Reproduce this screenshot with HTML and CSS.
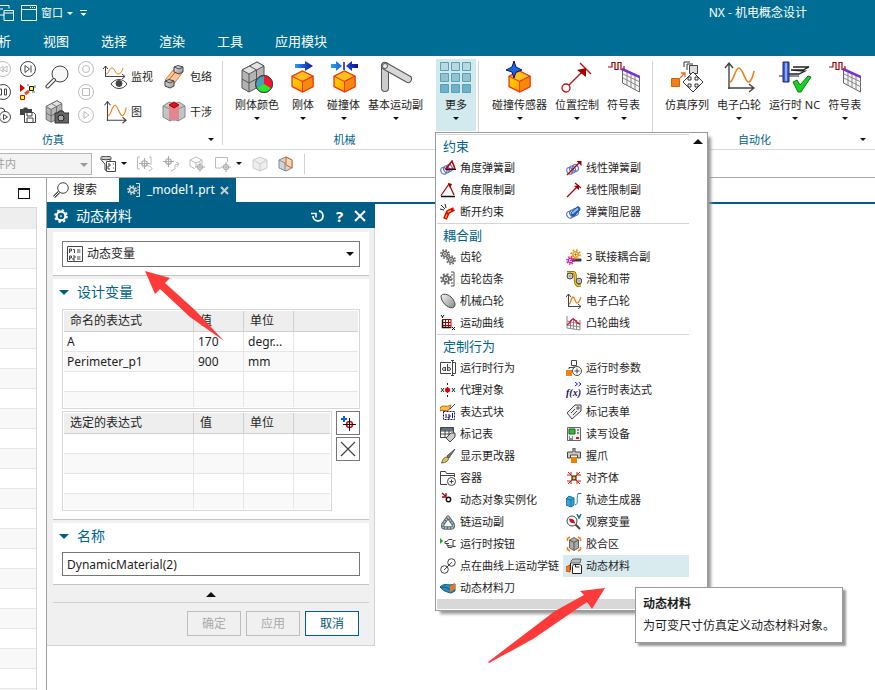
FILE: index.html
```html
<!DOCTYPE html>
<html lang="zh-CN">
<head>
<meta charset="utf-8">
<title>NX - 机电概念设计</title>
<link rel="stylesheet" href="styles.css">
</head>
<body>
<svg class="defs" aria-hidden="true">
  <defs>
    <linearGradient id="gOrange" x1="0" y1="0" x2="1" y2="1"><stop offset="0" stop-color="#ffe600"/><stop offset="1" stop-color="#ff8a00"/></linearGradient>
    <linearGradient id="gGrey" x1="0" y1="0" x2="1" y2="1"><stop offset="0" stop-color="#f4f4f4"/><stop offset="1" stop-color="#8a8a8a"/></linearGradient>
    <linearGradient id="gBlue" x1="0" y1="0" x2="1" y2="0"><stop offset="0" stop-color="#2a9df0"/><stop offset="1" stop-color="#1010a8"/></linearGradient>
    <symbol id="orangeCube" viewBox="0 0 22 22">
      <path d="M1 6 11 1l10 5v10l-10 5-10-5z" fill="url(#gOrange)" stroke="#f03a10" stroke-width="1.3" stroke-linejoin="round"/>
      <path d="M1 6l10 5 10-5-10-5z" fill="#ffc21a" stroke="#f03a10" stroke-linejoin="round"/>
      <path d="M11 11l10-5v10l-10 5z" fill="#f58a0a" stroke="#f03a10" stroke-linejoin="round"/>
    </symbol>
    <symbol id="greyStack" viewBox="0 0 24 32">
      <path d="M1 9 16 1l7 4v18L8 31l-7-4z" fill="#b4b4b4" stroke="#555"/>
      <path d="M1 9 16 1l7 4L8 13z" fill="#e2e2e2" stroke="#555"/>
      <path d="M8 13v18M1 18l7 4 15-8M15.500 9v18M8.500 5l7 4" fill="none" stroke="#555"/>
    </symbol>
    <symbol id="symTable" viewBox="0 0 32 32">
      <path d="M0 6h4V1.500h3v7h3v-7h3v7h3V5" fill="none" stroke="#a80000" stroke-width="1.200"/>
      <path d="M14.500 8l17 8v15l-17-9z" fill="#f6f6f6" stroke="#666"/>
      <path d="M19 10v14M23 12v15M27 14v15M15 13l17 8M15 17l17 9" fill="none" stroke="#888"/>
      <path d="M14 8 32 16" stroke="#7a30d8" stroke-width="2.500"/>
    </symbol>
    <symbol id="wave" viewBox="0 0 32 32">
      <path d="M6 28V3M2 7l4-5 4 5M5 27h25M26 23l5 4-5 4" fill="none" stroke="#444" stroke-width="1.400"/>
      <path d="M7 21c4-1 5-14 9-14s6 15 10 14c3-1 4-6 5-11" fill="none" stroke="#f08018" stroke-width="1.600"/>
    </symbol>
    <symbol id="gear" viewBox="0 0 16 16">
      <circle cx="8" cy="8" r="6.500" fill="none" stroke="currentColor" stroke-width="2.600" stroke-dasharray="2.600 2.500"/>
      <circle cx="8" cy="8" r="4" fill="none" stroke="currentColor" stroke-width="2.400"/>
      <circle cx="8" cy="8" r="1" fill="currentColor"/>
    </symbol>
    <symbol id="spring" viewBox="0 0 16 16">
      <g fill="none" stroke="#5f78c8" stroke-width="1.300"><ellipse cx="4" cy="11" rx="3" ry="3.800" transform="rotate(-30 4 11)"/><ellipse cx="7" cy="9.500" rx="3" ry="3.800" transform="rotate(-30 7 9.500)"/><ellipse cx="10" cy="8" rx="3" ry="3.800" transform="rotate(-30 10 8)"/></g>
    </symbol>
    <symbol id="target" viewBox="0 0 16 16"><circle cx="8" cy="8" r="4" fill="none" stroke="currentColor" stroke-width="1.800"/><path d="M8 0v16M0 8h16" stroke="currentColor" stroke-width="1.600"/></symbol>
  </defs>
</svg>

<header class="top">
  <div class="titlebar">
    <div class="quick">
      <button class="q" aria-label="切换窗口"><svg width="14" height="16" viewBox="0 0 14 16"><path d="M-4 .5H9v3M-4 4h7M4 5.500h9.500v10H4zM4 8h9.500M4.500 10H0" fill="none" stroke="#fff"/></svg></button>
      <button class="q win"><svg width="16" height="16" viewBox="0 0 16 16"><path d="M.5.5h15v15H.5zM.5 4.500h15" fill="none" stroke="#fff"/><path d="M9 2.500h5" stroke="#fff" stroke-dasharray="1 1"/></svg><span>窗口</span><i class="caret"></i></button>
      <button class="q" aria-label="自定义"><svg width="7" height="7" viewBox="0 0 7 7"><path d="M0 .5h7" stroke="#fff"/><path d="M.5 3h6l-3 3z" fill="#fff"/></svg></button>
    </div>
    <div class="apptitle">NX - 机电概念设计</div>
  </div>
  <nav class="tabs">
    <a href="#">分析</a><a href="#">视图</a><a href="#">选择</a><a href="#">渲染</a><a href="#">工具</a><a href="#">应用模块</a>
  </nav>
</header>

<section class="ribbon">
  <div class="group sim">
    <div class="tools">
      <div class="col small">
        <button aria-label="后退"><svg class="dim" viewBox="0 0 16 16"><circle cx="8" cy="8" r="7.500"/><path d="M8 5v6L4 8zM12 5v6L8 8z"/></svg></button>
        <button aria-label="暂停"><svg viewBox="0 0 16 16"><circle cx="8" cy="8" r="7.500"/><path d="M4.500 5h2v6h-2zM9.500 5h2v6h-2z"/></svg></button>
        <button aria-label="循环播放"><svg viewBox="0 0 16 16"><circle cx="6" cy="5" r="4"/><circle cx="10" cy="10" r="5.500" fill="#fff"/><path d="M8.500 7.500v5l4-2.500z"/></svg></button>
      </div>
      <div class="col small">
        <button aria-label="前进"><svg viewBox="0 0 16 16"><circle cx="8" cy="8" r="7.500"/><path d="M5 4.500v7L9.500 8zM11 4.500v7"/></svg></button>
        <button aria-label="捕捉排列"><svg viewBox="0 0 16 16"><path d="M0 0v8l5-4z" fill="#d80000" stroke="none"/><path d="M.5 11.500h4v4h-4z" fill="#ff0" stroke="#e00000"/><path d="M9.500 2.500h4v4h-4z" fill="#ff0" stroke="#111"/><path d="M5 10l4-3" stroke="#e05020" stroke-width="3"/><path d="M7 1h2M15 1v3M15 8h-3" stroke="#3868d0"/></svg></button>
        <button aria-label="保存快照"><svg viewBox="0 0 16 16"><path d="M0 2h3l1-1.500h3L8 2h4v6H0z" fill="#444" stroke="none"/><path d="M4.500 5.500h9l2 2v8h-11z" fill="#fff"/><path d="M7 6v3h5V6M7 15v-4h6v4"/></svg></button>
      </div>
      <div class="col mid">
        <button aria-label="检查"><svg viewBox="0 0 24 24"><circle cx="15" cy="9" r="8" fill="#f8f8f8"/><path d="M9 15l-6.500 6.500" stroke="#444" stroke-width="4" stroke-linecap="round"/><path d="M9 15l-6.500 6.500" stroke="#fff" stroke-width="2" stroke-linecap="round"/></svg></button>
        <button aria-label="快照"><svg viewBox="0 0 24 24"><use href="#greyStack" x="0" y="0" width="18" height="23"/><path d="M10 13h3l1-2h4l1 2h5v10H10z" fill="#666" stroke="#333"/><circle cx="16" cy="18" r="3" fill="#aaa" stroke="#222"/></svg></button>
      </div>
      <div class="col small">
        <button aria-label="录制"><svg class="dim" viewBox="0 0 16 16"><circle cx="8" cy="8" r="7.500"/><circle cx="8" cy="8" r="3.500"/></svg></button>
        <button aria-label="停止"><svg class="dim" viewBox="0 0 16 16"><circle cx="8" cy="8" r="7.500"/><path d="M4.500 4.500h7v7h-7z"/></svg></button>
        <button aria-label="播放"><svg class="dim" viewBox="0 0 16 16"><circle cx="8" cy="8" r="7.500"/><path d="M6 4.500v7L11 8z"/></svg></button>
      </div>
      <div class="col mid">
        <button><svg viewBox="0 0 24 24"><path d="M2.500 12V1M0 4l2.500-3L5 4M2 11.500h20M19 9l3 2.500-3 2.500"/><path d="M3 9c3 0 3-6 6-6s3 6 6 6 4-3 5-6" stroke="#f08018"/><path d="M8 19c4-6 12-6 16 0-4 6-12 6-16 0z" fill="#fff"/><circle cx="16" cy="18.500" r="3" fill="#444"/></svg><span>监视</span></button>
        <button><svg viewBox="0 0 24 24"><use href="#wave" x="0" y="0" width="24" height="24"/></svg><span>图</span></button>
      </div>
      <div class="col mid">
        <button><svg viewBox="0 0 24 24"><path d="M3 15 12 4l8 4-9 12z" fill="#f8c49a" stroke="#e08030"/><path d="M6 16 15 5" stroke="#d86010"/><path d="M12 2l4-1.500L21 2v5l-4 2-5-2z" fill="url(#gGrey)"/><path d="M12 2l5 2 4-2M3 16l4-1.500L12 16v5l-4 2-5-2z" fill="url(#gGrey)"/><path d="M3 16l5 2 4-2"/></svg><span>包络</span></button>
        <button><svg viewBox="0 0 24 24"><path d="M1 6l6-4 5 2 5-2 6 4v11l-7 4-4-2-4 2-7-4z" fill="#c4c4c4" stroke="#888"/><path d="M1 6l7 3v12M23 6l-7 3v12" stroke="#888"/><path d="M7 6v13l5 2 5-2V6z" fill="#e08890" stroke="none"/><path d="M7 5l5-3 5 3-5 3z" fill="#e01020" stroke="#a00"/></svg><span>干涉</span></button>
      </div>
    </div>
    <div class="caption"><span>仿真</span><i class="caret"></i></div>
  </div>

  <div class="group mech">
    <div class="tools">
      <button class="big"><svg viewBox="0 0 32 32"><use href="#greyStack" x="0" y="0" width="24" height="32"/><circle cx="23" cy="23" r="8.500" fill="#4aa0b8" stroke="#333"/><path d="M23 23v-8.500a8.500 8.500 0 0 1 7 13z" fill="#ff1030"/><path d="M23 23l7 4.500a8.500 8.500 0 0 1-14 0z" fill="#28e828"/><circle cx="23" cy="23" r="8.500" fill="none" stroke="#444"/></svg><span>刚体颜色</span><i class="caret"></i></button>
      <button class="big"><svg viewBox="0 0 32 32"><path d="M8 3h10V0l8 5-8 5V7H8z" fill="url(#gBlue)"/><use href="#orangeCube" x="4" y="9" width="23" height="23"/></svg><span>刚体</span><i class="caret"></i></button>
      <button class="big"><svg viewBox="0 0 32 32"><path d="M3 3h5V0l6 5-6 5V7H3zM30 3h-6V0l-6 5 6 5V7h6z" fill="url(#gBlue)"/><path d="M16 1v8" stroke="#1010a8" stroke-width="1.500"/><use href="#orangeCube" x="5" y="9" width="23" height="23"/></svg><span>碰撞体</span><i class="caret"></i></button>
      <button class="big"><svg viewBox="0 0 32 32"><path d="M5 5v22" stroke="#555" stroke-width="8" stroke-linecap="round"/><path d="M5 5v22" stroke="#ccc" stroke-width="6" stroke-linecap="round"/><path d="M5 5l23 13" stroke="#555" stroke-width="8" stroke-linecap="round"/><path d="M5 5l23 13" stroke="#d8d8d8" stroke-width="6" stroke-linecap="round"/><circle cx="5" cy="5" r="2.500" fill="#eee" stroke="#555"/></svg><span>基本运动副</span><i class="caret"></i></button>
      <div class="morewrap">
        <button class="big more" aria-expanded="true"><svg viewBox="0 0 32 32"><g stroke="#58a0b4" fill="#b8d8e2"><path d="M.5 1.500h8v8h-8zM11.500 1.500h8v8h-8zM22.500 1.500h8v8h-8z"/><path fill="#94c2d2" d="M.5 12.500h8v8h-8zM11.500 12.500h8v8h-8zM22.500 12.500h8v8h-8z"/><path fill="#70b0c8" d="M.5 23.500h8v8h-8zM11.500 23.500h8v8h-8zM22.500 23.500h8v8h-8z"/></g></svg><span>更多</span><i class="caret"></i></button>

        <div class="menu">
          <div class="menu-body">
            <div class="sections">
              <section>
                <h2>约束</h2>
                <div class="items">
                  <button><svg viewBox="0 0 16 16"><use href="#spring" width="15" height="16"/><path d="M6 9l6-8 3 8z" stroke="#b80000" stroke-width="1.500"/><path d="M6 9.500h10" stroke="#111"/></svg>角度弹簧副</button>
                  <button><svg viewBox="0 0 16 16"><use href="#spring" width="15" height="16"/><path d="M1 15 13 3" stroke="#b80000" stroke-width="1.300"/><path d="M15.500 1v5l-5-5z" fill="#900" stroke="none"/></svg>线性弹簧副</button>
                  <button><svg viewBox="0 0 16 16"><path d="M1 13.500 9 2l5 11" stroke="#b80000" stroke-width="1.300"/><path d="M8 1l4 1-2 4z" fill="#900" stroke="none"/><path d="M1 14.500h14" stroke="#111" stroke-width="1.500"/></svg>角度限制副</button>
                  <button><svg viewBox="0 0 16 16"><path d="M1 15 11 5M9 1l6 5" stroke="#b80000" stroke-width="1.300"/><path d="M13 3v5L8 4z" fill="#900" stroke="none"/></svg>线性限制副</button>
                  <button><svg viewBox="0 0 16 16"><path d="M5 15l3-7 6-3" stroke="#d80000" stroke-width="4"/><path d="M5.500 14 8 8l5.500-3" stroke="#ffa010" stroke-width="1.500" stroke-dasharray="4 2"/><path d="M1 1l4 4M5 0l1 4M0 5l4 1" stroke="#222"/></svg>断开约束</button>
                  <button><svg viewBox="0 0 16 16"><use href="#spring" width="15" height="16"/><path d="M7 10l5-5" stroke="#2058b0" stroke-width="5" stroke-linecap="round"/><path d="M6 9.500l6-5" stroke="#88c8f0" stroke-width="2"/></svg>弹簧阻尼器</button>
                </div>
              </section>
              <section>
                <h2>耦合副</h2>
                <div class="items">
                  <button><svg viewBox="0 0 16 16" color="#666"><use href="#gear" x="0" y="0" width="10" height="10"/><use href="#gear" x="6" y="6" width="10" height="10"/></svg>齿轮</button>
                  <button><svg viewBox="0 0 16 16"><path d="M6 10h9v2H6z" fill="#1028a0"/><g color="#f09810"><use href="#gear" x="4" y="0" width="11" height="11"/></g><g color="#d020a0"><use href="#gear" x="0" y="7" width="9" height="9"/></g></svg>3 联接耦合副</button>
                  <button><svg viewBox="0 0 16 16" color="#666"><use href="#gear" x="0" y="2" width="12" height="12"/><path d="M11 1h3v14h-3M11 4h2M11 8h2M11 12h2" stroke="#555"/></svg>齿轮齿条</button>
                  <button><svg viewBox="0 0 16 16"><path d="M1 1.500h6c4 0 1 8 3 11 1 2 3 2.500 5 2.500" stroke="#806000" stroke-width="3"/><path d="M1 1.500h6c4 0 1 8 3 11 1 2 3 2.500 5 2.500" stroke="#f0c830" stroke-width="1.500"/><circle cx="4" cy="5" r="3" fill="#ccc"/><circle cx="13" cy="10" r="2.800" fill="#ccc"/><path d="M3.500 5h1M12.500 10h1"/></svg>滑轮和带</button>
                  <button><svg viewBox="0 0 16 16"><path d="M1 3c1-3 7-2 10 1 4 4 5 8 3 10-3 3-13-3-13-11z" fill="url(#gGrey)"/></svg>机械凸轮</button>
                  <button><svg viewBox="0 0 16 16"><path d="M2.500 14V1M0 4l2.500-3L5 4M2 13.500h13M12 11l3 2.500-3 2.500"/><path d="M3 11c2 0 2-7 4-7s2 6 4 6 3-3 4-6" stroke="#f08018" stroke-width="1.300"/></svg>电子凸轮</button>
                  <button><svg viewBox="0 0 16 16"><path d="M2.500 4v9M5.500 4v9M8.500 4v9M11 4v9M2 4.500h9M2 7.500h9M2 10.500h9" stroke="#b80000"/><path d="M2 12.500h9M2.500 5v8" stroke="#111" stroke-width="1.500"/><path d="M1 0l1.500 2L4 0M2.500 2v1M12 12l3 3M15 12l-3 3" stroke="#111"/></svg>运动曲线</button>
                  <button><svg viewBox="0 0 16 16"><path d="M1 1v12l13 2V5M4.500 5v8M7.500 3v11M10.500 5v9M1 6l13 3M1 10l13 2" stroke="#888"/><path d="M1 10c3-1 4-6 6-6s3 4 7 5" stroke="#e01040" stroke-width="1.500"/></svg>凸轮曲线</button>
                </div>
              </section>
              <section>
                <h2>定制行为</h2>
                <div class="items">
                  <button><svg viewBox="0 0 16 16"><path d="M11 2.500H.5v11H11M13 2.500h2.500v11H13M11 .5h3M11 15.500h3M12.500 1v14"/><circle cx="4" cy="9" r="1.500"/><path d="M5.500 7v4M7.500 4v7"/><circle cx="9" cy="9" r="1.500"/></svg>运行时行为</button>
                  <button><svg viewBox="0 0 16 16"><path d="M5.500.5h5v5h-5zM8 6v3M3 9V7.500h6"/><path d="M0 10h6v6H0z" fill="#f08018" stroke="none"/><circle cx="11" cy="11" r="4.500" fill="#fff"/><path d="M8.500 11h5M11 8.500v5"/></svg>运行时参数</button>
                  <button><svg viewBox="0 0 16 16"><path d="M1 6l3 4M4 6l-3 4M12 6l3 4M15 6l-3 4" stroke="#222"/><path d="M7.500 1v14" stroke="#1818a0" stroke-dasharray="2 2"/><circle cx="7.500" cy="8" r="2.500" fill="#e00000" stroke="none"/></svg>代理对象</button>
                  <button><svg viewBox="0 0 16 16"><path d="M9 0l2.500 2L9 4M12.500 0 15 2l-2.500 2" stroke="#1010ff"/><text class="fx" x="0" y="14">f(x)</text></svg>运行时表达式</button>
                  <button><svg viewBox="0 0 16 16"><path d="M3.500 7.500h11v8h-11z" fill="#fff" stroke="#101080" stroke-dasharray="2 1"/><path d="M6 14v-4M8 11h2v2H8v1h2M12.500 14V9" stroke="#101080"/><path d="M0 4c3-4 6 0 11-3l-2 5c-4 2-6-1-9 1z" fill="#ffc040" stroke="#c06000"/><path d="M15 0l-5 5" stroke="#444"/></svg>表达式块</button>
                  <button><svg viewBox="0 0 16 16"><path d="M1 9 9 1h6v6l-9 8z" fill="#eee"/><circle cx="12" cy="4" r="1.200"/><path d="M5 9l4-4M7 11l4-4"/></svg>标记表单</button>
                  <button><svg viewBox="0 0 16 16"><path d="M.5 1.500h13v10H.5zM5 2v9M9 2v9M1 5h13M1 8h13"/><path d="M1 2h12v2H1z" fill="#68a8c0"/><path d="M6 12l5-5h4v4l-5 5z" fill="#ccc"/></svg>标记表</button>
                  <button><svg viewBox="0 0 16 16"><path d="M1.500 1.500h13v13h-13z" fill="#eee" stroke="#666"/><path d="M3 3h6v5H3z" fill="#10d020"/><path d="M11 4h2M11 7h2M3 11h1M6 11h1M3 13h4" stroke="#222"/><path d="M10 11h3v2h-3z" fill="#c02020" stroke="none"/></svg>读写设备</button>
                  <button><svg viewBox="0 0 16 16"><path d="M15 1 7 8l2 2z" fill="#777" stroke="#555"/><path d="M7 9l1.500 1.500c0 2-2 4-7 4.500 1-2 1.500-6 5.500-6z" fill="#e0c060" stroke="#706020"/></svg>显示更改器</button>
                  <button><svg viewBox="0 0 16 16"><path d="M7 0h2v4h5.500v6h-3V7h-7v3h-3V4H7z" fill="#ccc"/><path d="M5 9h6v6H5z" fill="#f08000" stroke="none"/></svg>握爪</button>
                  <button><svg viewBox="0 0 16 16"><path d="M7 14.500H.5V1.500h5l1 2h8V7M1 5.500h14"/><circle cx="11.500" cy="11.500" r="4" fill="#fff"/><path d="M9.500 11.500h4M11.500 9.500v4"/></svg>容器</button>
                  <button><svg viewBox="0 0 16 16"><path d="M2 2l4 4M14 2l-4 4M2 14l4-4M14 14l-4-4M5 2v3H1M11 2v3h4M5 14v-3H1M11 14v-3h4" stroke="#c02010"/><path d="M6 6h4v4H6z" fill="#ffb020" stroke="#111"/></svg>对齐体</button>
                  <button><svg viewBox="0 0 16 16"><path d="M2 1l4 3.500M6 1v4H2" stroke="#b80000" stroke-width="1.300"/><circle cx="8.500" cy="7.500" r="2.200" stroke="#111" stroke-width="1.400"/></svg>动态对象实例化</button>
                  <button><svg viewBox="0 0 16 16"><path d="M0 7l3-3 5 2v7l-3 2-5-2z" fill="#38a8d0" stroke="#1870a0"/><path d="M5 8v7M0 7l5 1 3-2" stroke="#1870a0"/><path d="M9 13c4-1 1-6 3-11.500h3.500" stroke="#208098"/></svg>轨迹生成器</button>
                  <button><svg viewBox="0 0 16 16"><path d="M8 3 13 10c1 3 0 4-2 4H5c-2 0-3-1-2-4z" stroke="#5a6870" stroke-width="3.500" stroke-linejoin="round"/><path d="M8 3 13 10c1 3 0 4-2 4H5c-2 0-3-1-2-4z" stroke="#b4c0c6" stroke-width="1.500" stroke-dasharray="2 1"/></svg>链运动副</button>
                  <button><svg viewBox="0 0 16 16"><circle cx="6" cy="7" r="5"/><path d="M9.500 10.500l4.500 4.500" stroke-width="2"/><path d="M3.500 5l4 1 1 3-4-1z" fill="#d01020" stroke="#d01020"/><path d="M11 0l2 4 2-4" stroke="#107088" stroke-width="1.500"/></svg>观察变量</button>
                  <button><svg viewBox="0 0 16 16"><path d="M0 2l3 3-3 3z" fill="#10b010" stroke="none"/><path d="M15.500 4.500H13l-1-1H8.500L7 5.500H5v2h4M7 7.500v2h2M8 9.500v2h4l1-1h2.500zM13 5v5.500"/></svg>运行时按钮</button>
                  <button><svg viewBox="0 0 16 16"><path d="M3.500 4 8 1.500 12.500 4v8L8 14.500 3.500 12z" fill="#aaa" stroke="#666"/><path d="M3.500 4 8 6.500 12.500 4M8 7v7" stroke="#555"/><path d="M1.500 5V2.500L4 1M12 1l2.500 1.500V5M1.500 11v2.500L4 15M12 15l2.500-1.500V11" stroke="#f08018" stroke-width="1.500"/></svg>胶合区</button>
                  <button><svg viewBox="0 0 16 16"><circle cx="4.500" cy="11.500" r="3.800"/><circle cx="11.500" cy="4.500" r="3.800"/><path d="M4 12l8-8"/></svg>点在曲线上运动学链</button>
                  <button class="on"><svg viewBox="0 0 16 16"><path d="M0 9l4-2v7l-4-1z" fill="#f08018" stroke="#c05000"/><path d="M5 3l2-2h8l-1 4H5z" fill="#bbb" stroke="#666"/><path d="M7.500 6.500h6l2 1v8h-9v-7z" fill="#fff" stroke="#222"/><path d="M4.500 5v7M9.500 7v2h4" stroke="#222"/></svg>动态材料</button>
                  <button><svg viewBox="0 0 16 16"><path d="M0 7c3-3 7-3 10-2l5-1v7l-4 2C7 12 3 11 0 7z" fill="#2890b8" stroke="#105878"/><path d="M10 6l5-3v6l-5 3z" fill="#e87820" stroke="none"/><path d="M1 7.500c3-1 6 0 9 2" stroke="#105878"/></svg>动态材料刀</button>
                </div>
              </section>
            </div>
            <div class="scroll"><i class="caret up"></i></div>
          </div>
          <div class="menu-foot"></div>
          <div class="tip" role="tooltip"><strong>动态材料</strong><span>为可变尺寸仿真定义动态材料对象。</span></div>
        </div>
      </div>
    </div>
    <div class="caption"><span>机械</span></div>
  </div>

  <div class="group">
    <div class="tools">
      <button class="big"><svg viewBox="0 0 32 32"><use href="#orangeCube" x="4" y="9" width="23" height="23"/><path d="M10 0l2 6 6 3-6 2-2 6-2-6-6-2 6-3z" fill="#1868e8" stroke="#101070"/></svg><span>碰撞传感器</span><i class="caret"></i></button>
      <button class="big"><svg viewBox="0 0 32 32"><circle cx="5" cy="27" r="4" fill="#fff" stroke="#c01010" stroke-width="1.300"/><path d="M8 24 23 9M19 2l11 11" stroke="#c01010" stroke-width="1.400"/><path d="M25 7v9l-9-7z" fill="#a00000"/></svg><span>位置控制</span><i class="caret"></i></button>
      <button class="big"><svg viewBox="0 0 32 32"><use href="#symTable" width="32" height="32"/></svg><span>符号表</span><i class="caret"></i></button>
    </div>
  </div>

  <div class="group auto">
    <div class="tools">
      <button class="big"><svg viewBox="0 0 32 32"><path d="M13 6V1h6M16 9V3h6" fill="none" stroke="#333"/><path d="M18.500 4.500h8v8h-8z" fill="#ddd" stroke="#444"/><path d="M.5 17.500h8v8h-8z" fill="#f08018" stroke="#d86000"/><path d="M9 17l5-5M10 12h4v4" fill="none" stroke="#e07020" stroke-width="1.300"/><path d="M22 11l5 5h-3v3h3v-3l5 5-5 5v-3h-3v3h3l-5 5-5-5h3v-3h-3v3l-5-5 5-5v3h3v-3h-3z" fill="#fff" stroke="#333"/></svg><span>仿真序列</span></button>
      <button class="big"><svg viewBox="0 0 32 32"><use href="#wave" width="32" height="32"/></svg><span>电子凸轮</span><i class="caret"></i></button>
      <button class="big"><svg viewBox="0 0 32 32"><path d="M14 6h16l-6 3H12l14 1-6 3H10" fill="none" stroke="#222" stroke-width="1.300"/><path d="M0 15h9M10 15h10" stroke="#222"/><path d="M4 1h6v20H4z" fill="#4060d0" stroke="#182878"/><path d="M7 2v18" stroke="#a8c0ff" stroke-width="1.500"/><path d="M14 21l4-2 3 5 8-9 3 1-10 15h-3z" fill="#18d028" stroke="#088010"/></svg><span>运行时 NC</span><i class="caret"></i></button>
      <button class="big"><svg viewBox="0 0 32 32"><use href="#symTable" width="32" height="32"/></svg><span>符号表</span><i class="caret"></i></button>
    </div>
    <div class="caption"><span>自动化</span><i class="caret"></i></div>
  </div>
</section>

<div class="selbar">
  <div class="scope"><select aria-label="选择范围" disabled><option>部件内</option></select><i class="caret"></i></div>
  <button aria-label="过滤器"><svg viewBox="0 0 16 16"><ellipse cx="6" cy="2" rx="5.500" ry="1.800" fill="#ccc"/><path d="M.5 3 5 8v6l3 1V8l3-5"/><path d="M6.500 5.500h9v10h-9z" fill="#fff"/><path d="M8 8h2v2H8v3h2M13 8h1M13 12h1" /></svg><i class="caret"></i></button>
  <button aria-label="选择组件" disabled><svg viewBox="0 0 16 16" color="#aaa"><path d="M3 1H.5v12H3M12 1h2v8" stroke="#bbb"/><use href="#target" x="2" y="2" width="11" height="11"/><path d="M10 10c4 0 5 1 5 3l-3 2" stroke="#bbb"/></svg></button>
  <button aria-label="选择路径" disabled><svg viewBox="0 0 16 16" color="#aaa"><use href="#target" x="0" y="0" width="11" height="11"/><path d="M8 15l4-2V9l3-1M13 6l3 2-2 3" stroke="#bbb"/></svg></button>
  <button aria-label="选择实体" disabled><svg viewBox="0 0 16 16" color="#aaa"><path d="M1 4l6-3 6 3v4M1 4v6l5 3M1 4l6 3 6-3M7 7v4" stroke="#bbb"/><use href="#target" x="6" y="6" width="10" height="10"/></svg></button>
  <button aria-label="框选" disabled><svg viewBox="0 0 16 16" color="#aaa"><path d="M6 12H.5V1.500h12V6" stroke="#bbb"/><use href="#target" x="6" y="6" width="10" height="10"/></svg><i class="caret"></i></button>
  <button aria-label="着色" disabled><svg viewBox="0 0 16 16"><path d="M1 4l7-3 7 3v8l-7 3-7-3z" fill="#eee" stroke="#ccc"/><path d="M1 4l7 4 7-4M8 8v7" stroke="#ccc"/></svg></button>
  <button aria-label="剖切"><svg viewBox="0 0 16 16"><path d="M1 4l7-3 6 3v8l-6 3-7-3z" fill="#d4d4d4" stroke="#888"/><path d="M1 4l6 3v8" stroke="#888"/><path d="M8 1l6 3v8l-6-3z" fill="#f4d8c4" stroke="#d86010"/></svg></button>
  <span class="sep"></span>
</div>

<main class="work">
  <aside class="nav">
    <button class="max" aria-label="最大化"></button>
    <div class="grid"></div>
  </aside>
  <div class="doc">
    <div class="doctabs">
      <a class="tab" href="#"><svg viewBox="0 0 16 16"><circle cx="10" cy="6" r="5.300"/><path d="M6 10l-5 5" stroke-width="3"/><path d="M6 10l-5 5" stroke="#fff"/></svg>搜索</a>
      <a class="tab on" href="#"><svg viewBox="0 0 14 16" color="#ddd"><use href="#gear" x="0" y="3" width="10" height="10"/><path d="M9 1.500h3.500v13H9M10 5h2M10 8h2M10 11h2" stroke="#ddd"/></svg>_model1.prt<svg class="x" viewBox="0 0 9 9"><path d="M1 1l7 7M8 1 1 8" stroke="#ccc" stroke-width="2"/></svg></a>
    </div>
    <div class="canvas">
      <form class="dialog">
        <div class="dtitle">
          <svg viewBox="0 0 16 16" width="14" height="14"><circle cx="8" cy="8" r="5" fill="none" stroke="#fff" stroke-width="2.500"/><circle cx="8" cy="8" r="6.800" fill="none" stroke="#fff" stroke-width="2" stroke-dasharray="2.700 2.640"/><circle cx="8" cy="8" r="1" fill="#fff"/></svg>
          <h1>动态材料</h1>
          <button type="button" aria-label="重置"><svg viewBox="0 0 14 14"><path d="M8 2a5 5 0 1 1-6 5" fill="none" stroke="#fff" stroke-width="1.800"/><path d="M0 4.500h5v4" fill="none" stroke="#fff" stroke-width="1.500"/></svg></button>
          <button type="button" class="help">?</button>
          <button type="button" aria-label="关闭"><svg viewBox="0 0 14 14"><path d="M2 2l10 10M12 2 2 12" stroke="#fff" stroke-width="2"/></svg></button>
        </div>
        <div class="card first">
          <div class="combo">
            <svg viewBox="0 0 16 16"><path d="M.5.5h15v15H.5z" fill="#fff" stroke="#444"/><path d="M2.500 7V3h2v2h-2M6 3.500h1.500V7M10 4h3.500M10 6h3.500M2.500 14v-4h2v2h-2M6 10h2v2H6v2h2M10 11h3.500M10 13h3.500" fill="none" stroke="#444"/></svg>
            <select aria-label="类型"><option>动态变量</option></select>
            <i class="caret"></i>
          </div>
        </div>
        <div class="card">
          <h3><i class="tri"></i>设计变量</h3>
          <table>
            <colgroup><col class="c1"><col class="c2"><col class="c2"><col></colgroup>
            <thead><tr><th>命名的表达式</th><th>值</th><th>单位</th><th></th></tr></thead>
            <tbody>
              <tr><td>A</td><td>170</td><td>degr...</td><td></td></tr>
              <tr><td>Perimeter_p1</td><td>900</td><td>mm</td><td></td></tr>
              <tr><td></td><td></td><td></td><td></td></tr>
              <tr class="last"><td></td><td></td><td></td><td></td></tr>
            </tbody>
          </table>
          <div class="pair">
            <table>
              <colgroup><col class="c1"><col class="c2"><col class="c2"><col></colgroup>
              <thead><tr><th>选定的表达式</th><th>值</th><th>单位</th><th></th></tr></thead>
              <tbody>
                <tr><td></td><td></td><td></td><td></td></tr>
                <tr><td></td><td></td><td></td><td></td></tr>
                <tr><td></td><td></td><td></td><td></td></tr>
                <tr class="last"><td></td><td></td><td></td><td></td></tr>
              </tbody>
            </table>
            <div class="side">
              <button type="button" aria-label="添加"><svg viewBox="0 0 16 16"><path d="M1 4h6M4 1v6" stroke="#0060ff" stroke-width="2"/><circle cx="9.500" cy="9.500" r="3" fill="none" stroke="#e00000" stroke-width="1.500"/><path d="M9.500 3v13M3 9.500h13" stroke="#111"/></svg></button>
              <button type="button" aria-label="移除"><svg viewBox="0 0 16 16"><path d="M1 1l14 14M15 1 1 15" stroke="#444" stroke-width="1.200"/></svg></button>
            </div>
          </div>
        </div>
        <div class="card name">
          <h3><i class="tri"></i><label for="nm">名称</label></h3>
          <input id="nm" type="text" value="DynamicMaterial(2)">
        </div>
        <div class="fold"><i class="caret up"></i></div>
        <div class="actions">
          <button type="button" disabled>确定</button>
          <button type="button" disabled>应用</button>
          <button type="button" class="go">取消</button>
        </div>
        <svg class="arrow a1" viewBox="0 0 80 72"><path d="M0 0l25 7-5 5 30 27 29 31L45 46 15 18l-5 5z" fill="#fd3a3a"/></svg>
      </form>
      <svg class="arrow a2" viewBox="0 0 118 78"><path d="M117 1 92 4l4 4-29 16L0 75l1 1 44-24 54-37 5 7z" fill="#fd3a3a"/></svg>
    </div>
  </div>
</main>
</body>
</html>
```

FILE: styles.css
```css
* { box-sizing: border-box; }
html, body { height: 100%; }
body {
  margin: 0;
  display: flex;
  flex-direction: column;
  overflow: hidden;
  background: #fff;
  color: #1e1e1e;
  font: 12px/16px "Noto Sans", "Noto Sans CJK SC", sans-serif;
}
button {
  margin: 0;
  padding: 0;
  border: 0;
  background: none;
  color: inherit;
  font: inherit;
}
a { color: inherit; text-decoration: none; }
h1, h2, h3 { margin: 0; font-weight: 400; }
svg { display: block; flex: none; }
.defs { position: absolute; width: 0; height: 0; }

.caret {
  display: block;
  flex: none;
  width: 0;
  height: 0;
  border: 3px solid transparent;
  border-top-color: #111;
  border-bottom-width: 0;
}
.caret.up {
  border: 5px solid transparent;
  border-bottom-color: #111;
  border-top-width: 0;
}

/* title and ribbon tabs */
.top {
  flex: none;
  height: 56px;
  overflow: hidden;
  background: #006e94;
  color: #fff;
}
.titlebar { display: flex; align-items: center; height: 26px; }
.quick { display: flex; align-items: center; flex: 1; gap: 7px; font-size: 11px; }
.q { display: flex; align-items: center; gap: 4px; }
.q .caret { border-top-color: #fff; }
.apptitle { padding-right: 68px; }
.tabs {
  display: flex;
  gap: 32px;
  margin-left: -15px;
  font-size: 13px;
  line-height: 30px;
  white-space: nowrap;
}

/* ribbon */
.ribbon {
  flex: none;
  display: flex;
  height: 94px;
  padding-top: 3px;
  border-bottom: 1px solid #d9d9d9;
  font-size: 11px;
}
.group {
  position: relative;
  flex: none;
  display: flex;
  flex-direction: column;
  padding: 0 9px;
}
.group::after {
  content: "";
  position: absolute;
  top: 2px;
  right: 0;
  bottom: 4px;
  width: 1px;
  background: #d4d4d4;
}
.group.mech { padding: 0 3px 0 8px; }
.group.auto { flex: 1; padding-left: 8px; }
.group.auto::after { display: none; }
.tools { display: flex; height: 72px; }
.caption {
  position: relative;
  padding-right: 18px;
  color: #00648c;
  line-height: 18px;
  text-align: center;
}
.caption .caret { position: absolute; right: 0; top: 7px; }
.group.sim { padding: 0 9px 0 0; overflow: hidden; }
.sim .tools { gap: 9px; margin-left: -5px; padding-right: 2px; }
.sim .caption { padding-right: 108px; }
.col { display: flex; flex-direction: column; }
.col svg, .items svg, .selbar svg, .tab svg { fill: none; stroke: #444; }
.col svg.dim { stroke: #bdbdbd; }
.col button { display: flex; align-items: center; gap: 4px; }
.small { gap: 7px; padding-top: 2px; }
.small svg { width: 16px; height: 16px; }
.mid { gap: 11px; padding-top: 6px; }
.mid svg { width: 24px; height: 24px; }
.big {
  display: flex;
  flex-direction: column;
  align-items: center;
  min-width: 40px;
  height: 72px;
  padding: 2px 4px 0;
  line-height: 24px;
  white-space: nowrap;
}
.big svg { width: 32px; height: 32px; overflow: visible; }
.morewrap { position: relative; margin-left: 9px; }
.more { background: #d2e9ee; }

/* gallery menu */
.menu {
  position: absolute;
  z-index: 5;
  top: 73px;
  left: -1px;
  width: 273px;
  padding: 1px;
  border: 1px solid #9a9a9a;
  background: #fff;
  box-shadow: 4px 4px 3px -1px #999;
}
.menu-body { display: flex; }
.sections { flex: 1; }
.sections section { border-top: 1px solid #d4d4d4; }
.sections h2 {
  padding-left: 6px;
  color: #00648c;
  font-size: 13px;
  line-height: 22px;
}
.items { display: grid; grid-template-columns: 1fr 1fr; }
.items button {
  display: flex;
  align-items: center;
  gap: 4px;
  height: 22px;
  padding-left: 3px;
  white-space: nowrap;
}
.items svg { width: 16px; height: 16px; }
.items .on { background: #daebf0; }
.fx {
  fill: #201060;
  stroke: none;
  font: italic bold 10px "Liberation Serif", serif;
}
.scroll { flex: none; width: 17px; padding: 5px 4px; }
.menu-foot { height: 10px; background: #d8d8d8; }
.tip {
  position: absolute;
  z-index: 6;
  left: 199px;
  top: 454px;
  display: flex;
  flex-direction: column;
  padding: 5px 7px;
  border: 1px solid #9a9a9a;
  background: #fff;
  box-shadow: 3px 3px 2px #999;
  font-size: 12px;
  line-height: 22px;
  white-space: nowrap;
}

/* selection bar */
.selbar {
  flex: none;
  display: flex;
  align-items: center;
  height: 28px;
  border-bottom: 1px solid #a8a8a8;
}
.selbar button { display: flex; align-items: center; gap: 5px; margin-right: 10px; }
.selbar svg { width: 16px; height: 16px; }
.scope {
  position: relative;
  width: 110px;
  margin: 0 8px 0 -18px;
}
.scope select {
  appearance: none;
  width: 100%;
  height: 22px;
  padding: 0;
  border: 1px solid #b8b8b8;
  border-radius: 0;
  background: #f3f3f3;
  color: #a0a0a0;
  opacity: 1;
  font: inherit;
  font-size: 11px;
}
.scope .caret {
  position: absolute;
  right: 4px;
  top: 10px;
  border-width: 4px 4px 0;
  border-top-color: #999;
}
.sep { width: 1px; height: 20px; background: #d0d0d0; }

/* work area */
.work { flex: 1; display: flex; min-height: 0; }
.nav {
  flex: none;
  display: flex;
  flex-direction: column;
  width: 47px;
  border-right: 1px solid #a0a0a0;
}
.max {
  width: 12px;
  height: 11px;
  margin: 10px 0 8px 18px;
  border: 1px solid #111;
  border-top-width: 2px;
}
.grid {
  flex: 1;
  width: 37px;
  padding-top: 21px;
  border-top: 1px solid #d8d8d8;
  border-right: 1px solid #d8d8d8;
  background: linear-gradient(#eee, #eee) 0 0 / 100% 21px no-repeat,
    repeating-linear-gradient(#fff 0 19px, #e6e6e6 19px 20px, #f8f8f8 20px 39px, #e6e6e6 39px 40px) 0 21px;
}
.doc { flex: 1; display: flex; flex-direction: column; min-width: 0; }
.doctabs { display: flex; height: 26px; border-bottom: 2px solid #005f87; }
.tab {
  display: flex;
  align-items: center;
  gap: 4px;
  padding: 0 22px 0 6px;
}
.tab svg { width: 16px; height: 16px; }
.tab.on {
  gap: 5px;
  padding: 0 7px;
  background: #005f87;
  color: #fff;
}
.tab svg.x { width: 9px; height: 9px; }
.canvas { position: relative; flex: 1; }

/* dialog */
.dialog {
  position: relative;
  width: 328px;
  border-bottom: 1px solid #d4d4d4;
  background: #f0f0f0;
  box-shadow: inset -1px 0 #d4d4d4;
}
.dtitle {
  display: flex;
  align-items: center;
  gap: 6px;
  height: 24px;
  padding: 0 7px;
  background: #005f87;
  color: #fff;
}
.dtitle h1 { flex: 1; padding-left: 2px; font-size: 14px; line-height: 24px; }
.dtitle button { width: 15px; }
.dtitle button svg { width: 14px; height: 14px; }
.dtitle .help { font-size: 15px; font-weight: 700; }
.card {
  margin: 0 6px 3px;
  padding: 3px 9px 8px;
  border-bottom: 1px solid #c4c4c4;
  background: #fff;
}
.card.first { margin-top: 4px; padding-top: 9px; }
.card h3 {
  display: flex;
  align-items: center;
  gap: 8px;
  margin: 0 0 7px -3px;
  color: #00648c;
  font-size: 14px;
  line-height: 20px;
}
.tri {
  border: 5px solid transparent;
  border-top-color: #005f87;
  border-bottom-width: 0;
}
.combo {
  display: flex;
  align-items: center;
  height: 26px;
  padding: 0 5px 0 4px;
  border: 1px solid #777;
}
.combo svg { width: 16px; height: 16px; }
.combo .caret { border-width: 4px 4px 0; }
.combo select {
  appearance: none;
  flex: 1;
  height: 22px;
  padding: 0 4px;
  border: 0;
  background: none;
  color: inherit;
  font: inherit;
}
table {
  width: 100%;
  height: 100px;
  table-layout: fixed;
  border-collapse: separate;
  border-spacing: 0;
  padding: 1px;
  border: 1px solid #d8d8d8;
}
.c1 { width: 130px; }
.c2 { width: 50px; }
th {
  height: 21px;
  padding: 0 6px;
  border-right: 1px solid #d0d0d0;
  border-bottom: 1px solid #d0d0d0;
  background: #eee;
  font-weight: 400;
  text-align: left;
}
td {
  height: 20px;
  padding: 0 4px;
  border-right: 1px solid #e6e6e6;
  border-bottom: 1px solid #e6e6e6;
}
td:first-child { padding-left: 3px; }
th, td { line-height: 16px; white-space: nowrap; }
th:last-child, td:last-child { border-right: 0; }
tbody tr:nth-child(even) { background: #f9f9f9; }
.last td { height: 15px; border-bottom: 0; }
.pair { display: flex; gap: 4px; margin-top: 2px; }
.side { flex: none; display: flex; flex-direction: column; gap: 2px; }
.side button {
  display: grid;
  place-items: center;
  width: 24px;
  height: 24px;
  border: 1px solid #777;
}
.side svg { width: 16px; height: 16px; }
.card.name { margin-bottom: 0; }
.name h3 { margin-bottom: 6px; }
.card input {
  display: block;
  width: 100%;
  height: 24px;
  padding: 0 4px;
  border: 1px solid #777;
  color: inherit;
  font: inherit;
}
.fold {
  display: flex;
  justify-content: center;
  margin: 0 6px;
  padding: 7px 0 5px;
  border-bottom: 1px solid #d0d0d0;
}
.actions {
  display: flex;
  justify-content: flex-end;
  gap: 5px;
  padding: 8px 16px 9px;
}
.actions button {
  width: 54px;
  height: 25px;
  border: 1px solid #bdbdbd;
  color: #aaa;
}
.actions .go { border-color: #005f87; background: #fff; color: #00547a; }

/* annotation arrows */
.arrow { position: absolute; z-index: 7; pointer-events: none; }
.a1 { left: 98px; top: 67px; width: 80px; height: 72px; }
.a2 { left: 441px; top: 383px; width: 118px; height: 78px; }
```
